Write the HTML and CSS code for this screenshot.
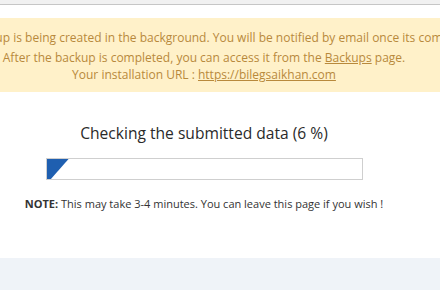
FILE: index.html
```html
<!DOCTYPE html>
<html lang="en">
<head>
    <meta charset="UTF-8">
    <title>Backup in progress</title>
    <link rel="stylesheet" href="styles.css">
</head>
<body>
    <div class="topbar"></div>
    <div class="card">
        <div class="content">
            <div class="notice">
                <p>Your backup is being created in the background. You will be notified by email once its completed.</p>
                <p class="gap">After the backup is completed, you can access it from the <a href="#">Backups</a> page.</p>
                <p>Your installation URL : <a href="#">https://bilegsaikhan.com</a></p>
            </div>
            <h2 class="status">Checking the submitted data (6 %)</h2>
            <div class="progress">
                <div class="progress-fill" style="width: 7%"></div>
            </div>
            <p class="note"><strong>NOTE:</strong> This may take 3-4 minutes. You can leave this page if you wish !</p>
        </div>
    </div>
</body>
</html>
```

FILE: styles.css
```css
body {
    margin: 0;
    background: #eff3f8;
    font-family: "Open Sans", Arial, sans-serif;
    color: #333;
    overflow: hidden;
}
.topbar {
    height: 4px;
    background: #f1f1f1;
    border-bottom: 1px solid #c8c8c8;
}
.card {
    background: white;
    height: 253px;
    padding-top: 13px;
    box-sizing: border-box;
    box-shadow: 0 2px 4px rgba(0,0,0,0.08);
}
.content {
    width: 408px;
    text-align: center;
}
.notice {
    background: #fff1c9;
    color: #b8893c;
    height: 74px;
    margin-left: -60px;
    width: 528px;
    padding-top: 11px;
    box-sizing: border-box;
    font-size: 12px;
    white-space: nowrap;
}
.notice p {
    margin: 0;
    line-height: 17px;
}
.notice .gap {
    margin-top: 3px;
}
.notice a {
    color: #b8893c;
}
.status {
    font-size: 15.6px;
    font-weight: normal;
    color: #2a2a2a;
    margin: 30px 0 0;
    line-height: 22px;
}
.progress {
    width: 315px;
    height: 20px;
    margin: 14px auto 0;
    border: 1px solid #cfcfcf;
    text-align: left;
}
.progress-fill {
    height: 100%;
    background: #1f5fb0;
    clip-path: polygon(0 0, 100% 0, 20% 100%, 0 100%);
}
.note {
    font-size: 11px;
    margin: 16px 0 0;
    white-space: nowrap;
}
```
